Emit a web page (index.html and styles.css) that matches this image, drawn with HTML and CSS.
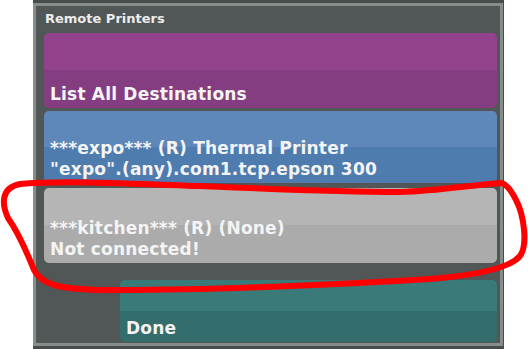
FILE: index.html
```html
<!DOCTYPE html>
<html lang="en">
<head>
    <meta charset="UTF-8">
    <title>Remote Printers</title>
    <link rel="stylesheet" href="styles.css">
</head>
<body>
    <div class="frame">
        <div class="panel">
            <h2 class="panel-title">Remote Printers</h2>
            <div class="btn btn-purple"><span>List All Destinations</span></div>
            <div class="btn btn-blue"><span>***expo*** (R) Thermal Printer<br>"expo".(any).com1.tcp.epson 300</span></div>
            <div class="btn btn-gray"><span>***kitchen*** (R) (None)<br>Not connected!</span></div>
            <div class="btn btn-teal btn-done"><span>Done</span></div>
        </div>
    </div>

    <!-- hand drawn highlight -->
    <svg class="scribble" width="528" height="349" viewBox="0 0 528 349">
        <path d="M502 183 C470 185 440 191 400 192 C330 192 250 188 200 186 C140 184 60 180 20 184 C0 188 2 205 8 218 C20 235 28 255 34 270 C42 285 60 289 100 290 C200 291 350 284 430 279 C480 275 510 268 520 256 C528 245 524 215 516 200 C511 190 507 185 502 183 Z"
              fill="none" stroke="#ff0000" stroke-width="6" stroke-linejoin="round"/>
    </svg>
</body>
</html>
```

FILE: styles.css
```css
* {
    margin: 0;
    padding: 0;
    box-sizing: border-box;
}

body {
    background: #ffffff;
    width: 528px;
    height: 349px;
    overflow: hidden;
    position: relative;
    font-family: "DejaVu Sans", Verdana, sans-serif;
}

.frame {
    margin-left: 33px;
    width: 471px;
    height: 349px;
    background-color: #474d4c;
    padding: 3px 1px 3px 0;
}

.panel {
    height: 343px;
    border: 3px solid #868e8c;
    background-color: #505756;
    padding: 0 3px 0 8px;
    display: flex;
    flex-direction: column;
}

.panel-title {
    height: 27px;
    padding: 6px 0 0 1px;
    font-size: 13px;
    font-weight: bold;
    line-height: 14px;
    color: #ececec;
}

.btn {
    border-radius: 5px;
    display: flex;
    flex-direction: column;
    justify-content: flex-end;
    padding: 0 0 3px 6px;
    color: #f4f4f4;
    font-weight: bold;
    font-size: 17px;
    line-height: 21px;
    letter-spacing: 0.2px;
    white-space: nowrap;
}

.btn-purple {
    height: 75px;
    background: linear-gradient(#93428d 50%, #843d80 50%);
}

.btn-blue {
    height: 72px;
    margin-top: 3px;
    background: linear-gradient(#5f88ba 50%, #4f7cae 50%);
}

.btn-gray {
    height: 75px;
    margin-top: 5px;
    background: linear-gradient(#b5b5b5 50%, #ababab 50%);
}

.btn-teal {
    height: 62px;
    margin-top: 17px;
    background: linear-gradient(#3a7a78 50%, #336e6d 50%);
}

.btn-done {
    margin-left: 76px;
}

.scribble {
    position: absolute;
    left: 0;
    top: 0;
    pointer-events: none;
}
```
